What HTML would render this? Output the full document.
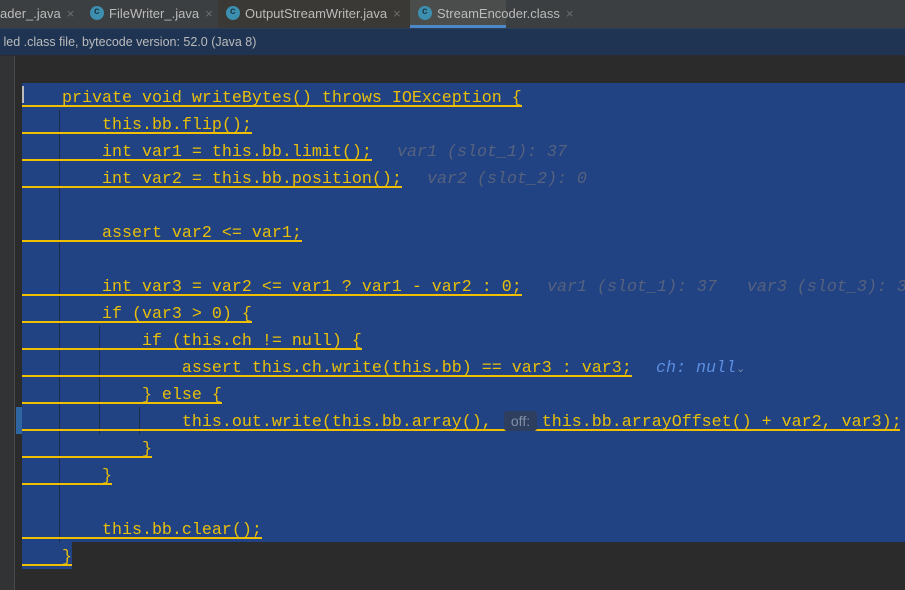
<!DOCTYPE html>
<html><head><style>
*{margin:0;padding:0;box-sizing:border-box}
body{width:905px;height:590px;background:#2b2b2b;position:relative;overflow:hidden;font-family:"Liberation Sans",sans-serif}
.tabs{position:absolute;left:0;top:0;width:905px;height:28px;background:#3c3f41;color:#bbb;font-size:13px}
.tab{position:absolute;top:0;height:28px;line-height:28px;white-space:nowrap}
.x{color:#6e6e6e;margin-left:6px}
.ic{display:inline-block;width:14px;height:14px;border-radius:7px;background:#3d8fb0;vertical-align:-2px;margin-right:5px;position:relative}
.ic:after{content:"c";position:absolute;left:4px;top:-8px;font-size:10px;color:#1c3a4a;font-weight:bold}
.info{position:absolute;left:0;top:28px;width:905px;height:27px;background:#1f3452;color:#bbb;font-size:12.5px;line-height:27px;border-top:1px solid #2b3f5a}
.gut{position:absolute;left:0;top:56px;width:15px;height:534px;background:#313335;border-right:1px solid #4a4a4a}
.sel{position:absolute;background:#214283}
.line{position:absolute;left:22px;height:27px;font-family:"Liberation Mono",monospace;font-size:16.67px;color:#e8bf0a;white-space:pre;line-height:27px}
.u{border-bottom:2px solid #f0c000;display:inline-block;line-height:31px;height:24px;vertical-align:top}
.h{position:absolute;font-family:"Liberation Mono",monospace;font-style:italic;font-size:16.67px;color:#56627e;white-space:pre;line-height:31px}
.g{position:absolute;width:1px;background:#1b2b4a}
</style></head><body>
<div class="tabs">
<div class="tab" style="left:0">ader_.java<span class="x">×</span></div>
<div class="tab" style="left:90px"><span class="ic"></span>FileWriter_.java<span class="x">×</span></div>
<div class="tab" style="left:218px;width:192px;background:#3a3935;padding-left:8px"><span class="ic"></span>OutputStreamWriter.java<span class="x">×</span></div>
<div class="tab" style="left:410px;width:96px;background:#4b4d4d;padding-left:8px;border-bottom:3px solid #4a88c7;width:96px"><span class="ic"></span>StreamEncoder.class<span class="x">×</span></div>
</div>
<div class="info">&nbsp;led .class file, bytecode version: 52.0 (Java 8)</div>
<div class="gut"></div>
<div style="position:absolute;left:16px;top:407px;width:6px;height:27px;background:#2f65a0"></div>
<div class="sel" style="left:22px;top:83px;width:883px;height:459px"></div>
<div class="sel" style="left:22px;top:542px;width:50px;height:27px"></div>
<div style="position:absolute;left:22px;top:86px;width:2px;height:17px;background:#bbb"></div>
<div class="g" style="left:59px;top:110px;height:432px"></div>
<div class="g" style="left:99px;top:326px;height:108px"></div>
<div class="g" style="left:139px;top:407px;height:27px"></div>

<div class="line" style="top:83px"><span class="u">    private void writeBytes() throws IOException {</span></div>
<div class="line" style="top:110px"><span class="u">        this.bb.flip();</span></div>
<div class="line" style="top:137px"><span class="u">        int var1 = this.bb.limit();</span></div>
<div class="h" style="left:397px;top:137px">var1 (slot_1): 37</div>
<div class="line" style="top:164px"><span class="u">        int var2 = this.bb.position();</span></div>
<div class="h" style="left:427px;top:164px">var2 (slot_2): 0</div>
<div class="line" style="top:218px"><span class="u">        assert var2 &lt;= var1;</span></div>
<div class="line" style="top:272px"><span class="u">        int var3 = var2 &lt;= var1 ? var1 - var2 : 0;</span></div>
<div class="h" style="left:547px;top:272px">var1 (slot_1): 37   var3 (slot_3): 37</div>
<div class="line" style="top:299px"><span class="u">        if (var3 &gt; 0) {</span></div>
<div class="line" style="top:326px"><span class="u">            if (this.ch != null) {</span></div>
<div class="line" style="top:353px"><span class="u">                assert this.ch.write(this.bb) == var3 : var3;</span></div>
<div class="h" style="left:656px;top:353px;color:#5c8fe0">ch: null<span style="font-style:normal;font-size:11px;color:#7a8aa8">⌄</span></div>
<div class="line" style="top:380px"><span class="u">            } else {</span></div>
<div class="line" style="top:407px"><span class="u" style="width:878px">                this.out.write(this.bb.array(),     this.bb.arrayOffset() + var2, var3);</span></div>
<div style="position:absolute;left:504px;top:411px;width:33px;height:20px;background:#2e3e5e;border-radius:3px;color:#8090a8;font-size:14px;line-height:20px;text-align:center">off:</div>
<div class="line" style="top:434px"><span class="u">            }</span></div>
<div class="line" style="top:461px"><span class="u">        }</span></div>
<div class="line" style="top:515px"><span class="u">        this.bb.clear();</span></div>
<div class="line" style="top:542px"><span class="u">    }</span></div>
</body></html>
